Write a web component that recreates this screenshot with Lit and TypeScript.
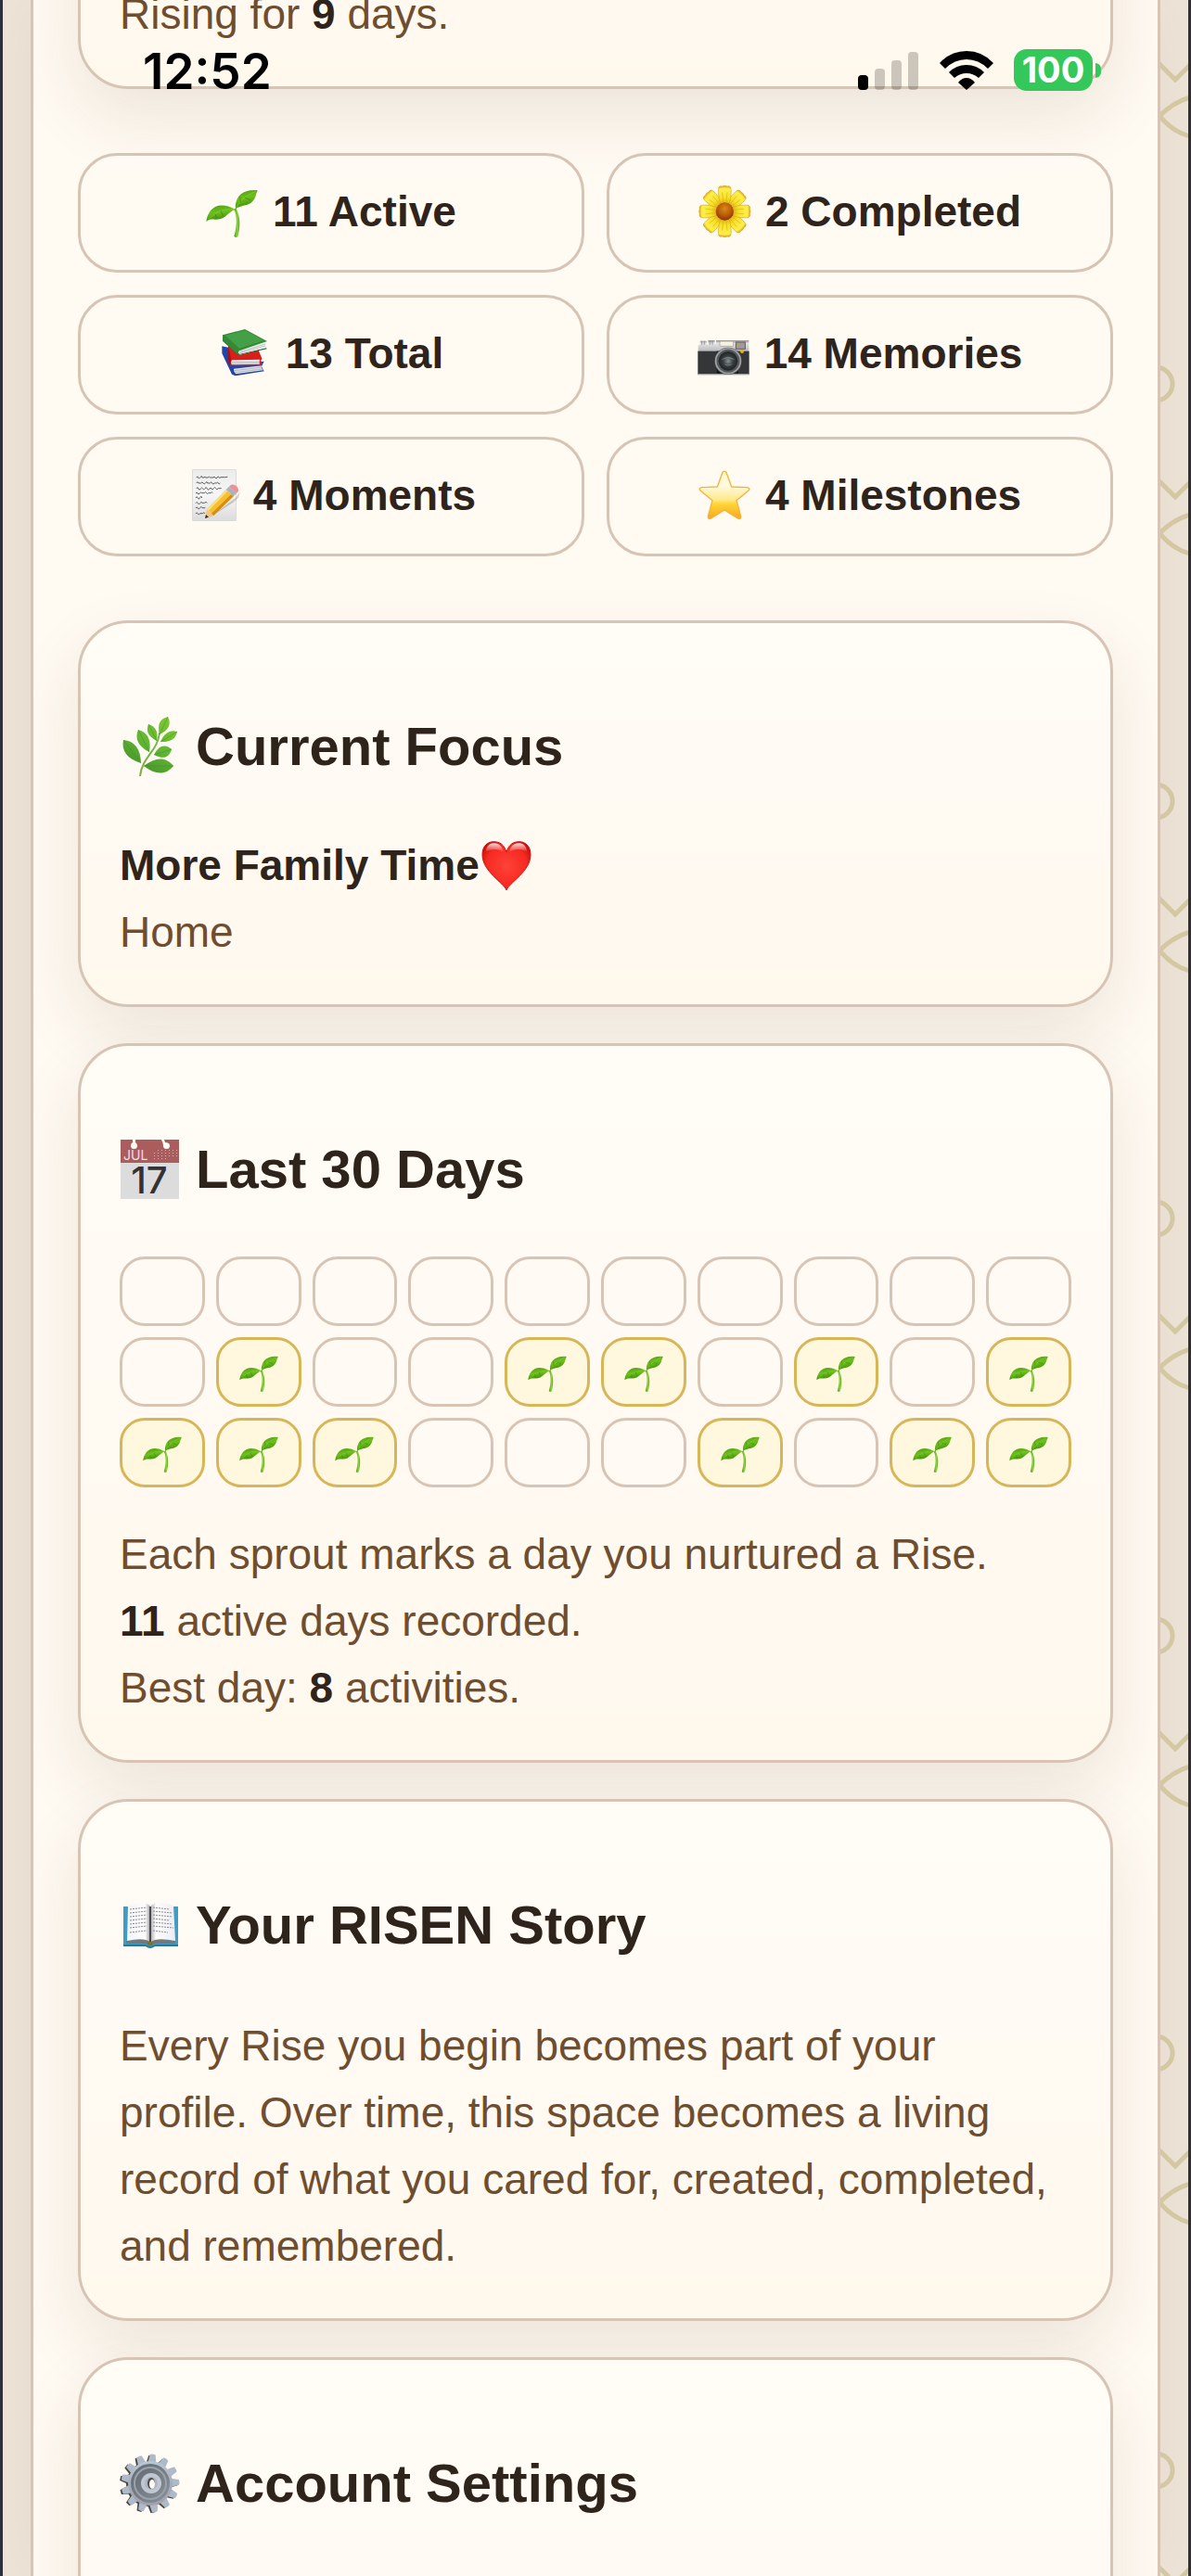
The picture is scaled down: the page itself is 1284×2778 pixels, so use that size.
import { LitElement, html, svg, css } from 'lit';
import { customElement, state } from 'lit/decorators.js';
import { classMap } from 'lit/directives/class-map.js';

// leaf outline between its base and its tip, bulging by w on each side
const leaf = (bx: number, by: number, tx: number, ty: number, w: number) => {
  const len = Math.hypot(tx - bx, ty - by);
  const nx = (-(ty - by) / len) * w;
  const ny = ((tx - bx) / len) * w;
  const ax = bx + (tx - bx) * 0.4;
  const ay = by + (ty - by) * 0.4;
  const cx = bx + (tx - bx) * 0.75;
  const cy = by + (ty - by) * 0.75;
  return `M${bx} ${by}C${ax + nx} ${ay + ny} ${cx + nx} ${cy + ny} ${tx} ${ty}C${cx - nx} ${cy - ny} ${ax - nx} ${ay - ny} ${bx} ${by}Z`;
};

const sprout = html`<svg class="emoji" viewBox="0 0 168 168" aria-hidden="true">
    <defs>
      <linearGradient id="sp-l" x1="0" y1="0" x2="0.3" y2="1">
        <stop offset="0" stop-color="#4f9a17" />
        <stop offset="0.5" stop-color="#6cc01c" />
        <stop offset="1" stop-color="#3f8a0c" />
      </linearGradient>
      <linearGradient id="sp-s" x1="0" y1="0" x2="1" y2="0">
        <stop offset="0" stop-color="#4d9a14" />
        <stop offset="0.6" stop-color="#8ad43e" />
        <stop offset="1" stop-color="#5aa51c" />
      </linearGradient>
    </defs>
    <path fill="url(#sp-s)" d="M91 76C101 100 101 130 91 165Q97 170 103 166C113 128 110 98 98 74Z" />
    <path fill="url(#sp-l)" d="M1 117C6 74 40 46 96 78C72 82 66 112 30 110C16 109 9 110 1 117Z" />
    <path fill="url(#sp-l)" d="M96 76C92 38 118 10 168 16C160 26 164 42 146 56C132 66 110 64 96 76Z" />
    <path fill="none" stroke="#86cf3a" stroke-width="2" d="M10 108C34 82 62 74 94 78M98 72C110 48 130 32 160 20" />
    <path fill="none" stroke="#3c820d" stroke-width="2" d="M30 92l4 14M48 82l8 18M112 54l-2-18M126 40l18 6" />
  </svg>`;

const flower = html`<svg class="emoji" viewBox="0 0 168 168" aria-hidden="true">
    <defs>
      <radialGradient id="fl-p" gradientUnits="userSpaceOnUse" cx="85" cy="84" r="84">
        <stop offset="0.3" stop-color="#e2b10c" />
        <stop offset="0.55" stop-color="#f8e32c" />
        <stop offset="0.88" stop-color="#fdf04a" />
        <stop offset="1" stop-color="#d99a1a" />
      </radialGradient>
      <radialGradient id="fl-c" cx="0.5" cy="0.35" r="0.65">
        <stop offset="0" stop-color="#d98a1a" />
        <stop offset="0.6" stop-color="#b85a08" />
        <stop offset="1" stop-color="#8c3204" />
      </radialGradient>
    </defs>
    ${[45, 135, 225, 315, 0, 90, 180, 270].map(
      (a) => svg`
        <g transform="rotate(${a} 85 84)">
          <path fill="url(#fl-p)" stroke="#d9a21c" stroke-width="2"
            d="M72 60C64 40 63 16 66 6Q70 0 77 3Q85 -1 93 3Q100 0 104 6C107 16 106 40 98 60Z" />
          <path stroke="#dcb01c" stroke-width="2" fill="none" d="M80 54L77 22M90 54L93 22" />
        </g>
      `,
    )}
    <circle cx="85" cy="84" r="29" fill="url(#fl-c)" />
  </svg>`;

const books = html`<svg class="emoji" viewBox="0 0 168 168" aria-hidden="true">
    <path fill="#2246a8" d="M10 61L34 66L46 118L146 110L138 126L144 139L147 142L53 157L42 152L10 84Z" />
    <path fill="#dfe2e8" d="M48 134L138 124Q136 132 143 139L55 151Q47 146 48 134Z" />
    <path stroke="#9aa0ac" stroke-width="2" d="M50 140L138 129M52 146L140 135" />
    <path fill="#d81f1c" d="M30 58L66 90L128 74L140 103L136 106L139 124L36 124L30 104Z" />
    <path fill="#a01414" d="M30 58L40 106L36 124L28 106Z" />
    <path fill="#ececee" d="M42 106L133 104Q129 112 132 119L42 121Q37 114 42 106Z" />
    <path stroke="#a5a5a8" stroke-width="2" d="M42 112H130M42 117H131" />
    <path fill="#1d6a20" d="M12 26L12 44L64 90L155 70L153 66L66 86Z" />
    <path fill="#f2f2f4" d="M68 75L152 48Q149 58 154 66L68 86Q62 80 68 75Z" />
    <path stroke="#a8a8ac" stroke-width="2" d="M68 79L150 54M67 83L151 60" />
    <path fill="#328a34" d="M12 25L84 6L156 45L66 76Q60 80 64 90L12 44Z" />
    <path fill="#43a046" d="M20 26L84 9L146 43L66 68Z" />
  </svg>`;

const camera = html`<svg class="emoji" viewBox="0 0 168 168" aria-hidden="true">
    <defs>
      <linearGradient id="ca-t" x1="0" y1="0" x2="0" y2="1">
        <stop offset="0" stop-color="#8f8f91" />
        <stop offset="0.25" stop-color="#e4e4e6" />
        <stop offset="1" stop-color="#b5b5b8" />
      </linearGradient>
      <radialGradient id="ca-l">
        <stop offset="0" stop-color="#8b9496" />
        <stop offset="0.5" stop-color="#3a4043" />
        <stop offset="1" stop-color="#202325" />
      </radialGradient>
    </defs>
    <path fill="url(#ca-t)" d="M2 58L8 56V44H30V56H34V42H56V54H60V42H166V80H2Z" />
    <path stroke="#77777a" stroke-width="2" d="M14 44V56M22 44V56M40 43V56M48 43V56" />
    <rect x="1" y="77" width="166" height="75" fill="#353638" />
    <rect x="62" y="77" width="70" height="75" fill="#1b1c1d" />
    <rect x="1" y="150" width="166" height="4" fill="#a0a0a2" />
    <rect x="72" y="45" width="44" height="16" rx="3" fill="#f6f1e2" stroke="#9a978c" stroke-width="2" />
    <rect x="124" y="48" width="30" height="22" fill="#a39b92" stroke="#5c5c5e" stroke-width="3" />
    <circle cx="99" cy="109" r="44" fill="#57595c" />
    <circle cx="99" cy="109" r="40" fill="none" stroke="#9fa2a5" stroke-width="5" />
    <circle cx="99" cy="109" r="31" fill="url(#ca-l)" />
    <path fill="#6d7779" d="M76 106Q98 84 122 106Q98 98 76 106ZM84 118Q99 132 116 116Q100 124 84 118Z" />
    <circle cx="144" cy="78" r="6" fill="#f5a81c" />
  </svg>`;

const memo = html`<svg class="emoji" viewBox="0 0 168 168" aria-hidden="true">
    <defs>
      <linearGradient id="me-p" x1="0" y1="0" x2="0" y2="1">
        <stop offset="0" stop-color="#ececec" />
        <stop offset="0.5" stop-color="#f6f6f6" />
        <stop offset="1" stop-color="#dcdcdc" />
      </linearGradient>
    </defs>
    <rect x="20" y="2" width="140" height="164" fill="url(#me-p)" stroke="#cfcfcf" stroke-width="2" />
    <g fill="none" stroke="#5c5c5c" stroke-width="3">
      <path d="M32 27q4-7 6 0t7-1t6 1h6q3-6 5 0h7q4-5 8 0h10q3-6 6 0t6 0t6-1t6 0h14l8-1" />
      <path d="M32 45q4-8 7 0h8q4-6 7 0t8-1t6 1h8q5-7 7 0t8 0h6q4-6 6 0t6 0" />
      <path d="M32 63q4-8 7 0t7 0q4-6 7 0t7-1t7 1t8 0q3-6 6 0t7-1t7 0t8 0h10" />
      <path d="M30 78q4-6 6 0t7 0t7-1h8q4-6 7 0t6 0h8q3-6 6 0" />
      <path d="M30 93q4-8 7 0t7-1t6 1" />
      <path d="M30 110q4-8 7 0t7 0t7-1h8q4-6 8 0" />
      <path d="M30 126q4-7 7 0t7-1t7 0h10" />
      <path d="M30 144q4-7 7 0t7-1h8q4-5 8 0" />
    </g>
    <path fill="#00000030" d="M66 163L160 92L172 74L168 92L150 108Z" />
    <path fill="#f0c48a" d="M60 158L66 130L88 150Z" />
    <path fill="#2b2b2b" d="M60 159L63 147L72 155Z" />
    <path fill="#f7c02c" d="M66 130L128 66L152 88L88 150Z" />
    <path fill="#d98e12" d="M81 143L145 81L152 88L88 150Z" />
    <path fill="#fde07a" d="M66 130L128 66L133 71L71 135Z" />
    <path fill="#a9b4bf" d="M128 66L138 56L162 78L152 88Z" />
    <path fill="#f08f94" d="M138 56Q148 44 162 55Q175 68 162 78Z" />
  </svg>`;

const star = html`<svg class="emoji" viewBox="0 0 168 168" aria-hidden="true">
    <defs>
      <linearGradient id="st" x1="0" y1="0" x2="0" y2="1">
        <stop offset="0" stop-color="#fff6c8" />
        <stop offset="0.3" stop-color="#fffbe0" />
        <stop offset="0.6" stop-color="#ffe98a" />
        <stop offset="0.68" stop-color="#ffd738" />
        <stop offset="1" stop-color="#f9a61a" />
      </linearGradient>
    </defs>
    <path fill="url(#st)" stroke="#f6b13a" stroke-width="4" stroke-linejoin="round"
      d="M78 10Q84 3 90 10L107 57L158 59Q170 62 161 70L123 101L137 152Q138 164 127 159L84 132L41 159Q30 164 31 152L45 101L7 70Q-2 62 10 59L61 57Z" />
  </svg>`;

const heart = html`<svg class="emoji" viewBox="0 0 168 168" role="img" aria-label="red heart">
    <defs>
      <radialGradient id="he" cx="0.5" cy="0.5" r="0.6">
        <stop offset="0" stop-color="#ff4238" />
        <stop offset="0.7" stop-color="#f62a22" />
        <stop offset="1" stop-color="#c80c0c" />
      </radialGradient>
      <linearGradient id="he-g" x1="0" y1="0" x2="0" y2="1">
        <stop offset="0" stop-color="#fff" stop-opacity="0.85" />
        <stop offset="1" stop-color="#fff" stop-opacity="0" />
      </linearGradient>
    </defs>
    <path fill="url(#he)" stroke="#cf1512" stroke-width="3"
      d="M87 165C78 140 9 105 9 50C9 20 28 8 46 8C66 8 80 18 87 42C94 18 108 8 128 8C146 8 165 20 165 50C165 105 96 140 87 165Z" />
    <path fill="url(#he-g)" d="M20 42C22 20 34 13 48 13C64 13 74 24 78 42C60 30 38 30 20 42ZM96 42C100 24 110 13 126 13C140 13 152 20 154 42C136 30 114 30 96 42Z" />
  </svg>`;

const herbLeaves = [
  [23, 50, 4, 25, 9],
  [32, 38, 20, 14, 8],
  [40, 26, 31, 8, 6],
  [43, 19, 52, 0, 7],
  [44, 27, 62, 16, 6],
  [37, 41, 56, 35, 8],
  [26, 53, 58, 53, 10],
];

const herb = html`<svg class="emoji" viewBox="0 0 64 64" aria-hidden="true">
    <defs>
      <linearGradient id="hb" gradientUnits="userSpaceOnUse" x1="50" y1="0" x2="16" y2="60">
        <stop offset="0" stop-color="#7cc832" />
        <stop offset="0.5" stop-color="#62b632" />
        <stop offset="1" stop-color="#438e2c" />
      </linearGradient>
    </defs>
    <path fill="none" stroke="#78b443" stroke-width="2" d="M22 64C23 52 30 44 37 34Q42 26 43 17" />
    ${herbLeaves.map(
      ([a, b, c, d, w]) => svg`
        <path fill="url(#hb)" d=${leaf(a, b, c, d, w)} />
        <path stroke="#3f8f24" stroke-opacity="0.5" d="M${a} ${b}L${c} ${d}" />
      `,
    )}
  </svg>`;

const calendar = html`<svg class="emoji" viewBox="0 0 64 64" aria-hidden="true">
    <rect x="1" width="63" height="64" fill="#dcdcdc" />
    <rect x="1" width="63" height="25" fill="#ab5d5d" />
    <path fill="#fffcf5" d="M14 0H17V3Q19 4 19 6.500A3.500 3.500 0 0 1 12 6.500Q12 4 14 3ZM45 0H48L49 3Q54 3 54 6.500A3.500 3.500 0 0 1 47 6.500Q47 4 45 0Z" />
    <text class="cal-month" x="4" y="22">JUL</text>
    <path stroke="#d8aaaa" stroke-width="1" stroke-dasharray="1 2"
      d="M37.500 14V22M41.500 11V22M45.500 11V22M49.500 11V22M53.500 11V20M57.500 11V20M61.500 11V18" />
    <text class="cal-day" x="32" y="58" text-anchor="middle">17</text>
  </svg>`;

const openBook = html`<svg class="emoji" viewBox="0 0 64 64" aria-hidden="true">
    <defs>
      <linearGradient id="ob-l" x1="0" y1="0" x2="1" y2="0">
        <stop offset="0" stop-color="#f4f3f7" />
        <stop offset="0.8" stop-color="#fdfdfe" />
        <stop offset="1" stop-color="#a8a8ae" />
      </linearGradient>
      <linearGradient id="ob-r" x1="1" y1="0" x2="0" y2="0">
        <stop offset="0" stop-color="#ececf2" />
        <stop offset="0.8" stop-color="#fdfdfe" />
        <stop offset="1" stop-color="#b8b8be" />
      </linearGradient>
    </defs>
    <path fill="#3f9cc4" d="M4 12H63V54H38Q33 58 28 54H4Z" />
    <path fill="#2a7599" d="M4 53H28Q33 57 38 53H63V55H38Q33 59 28 55H4Z" />
    <path fill="#77777a" d="M7 49L32 47L60 49V52H38L33 54L28 52H7Z" />
    <path fill="url(#ob-l)" d="M9 11Q26 5 32.500 11V50Q26 45 8 49Z" />
    <path fill="url(#ob-r)" d="M58 11Q40 5 34 11V50Q40 45 60 49Z" />
    <path stroke="#4a4a4c" stroke-width="2" d="M33 12V51" />
    <path stroke="#8c8c92" stroke-width="1" stroke-dasharray="2 1"
      d="M11 15L29 13M11 19L29 17M11 23L29 21M11 27L29 25M11 31L29 29M11 35L29 33M11 40L29 38M36 13L54 15M36 17L57 19M36 21L57 23M36 25L54 27M36 29L57 31M36 33L58 35M36 38L52 40" />
    <path fill="#7c7420" d="M29 51Q33 49 37 51L35 54H31Z" />
  </svg>`;

const gearTeeth = [5, 33, 61, 88, 116, 143, 171, 199, 226, 254, 282, 309, 337];

const gear = html`<svg class="emoji" viewBox="0 0 64 64" aria-hidden="true">
    <defs>
      <linearGradient id="ge" x1="0" y1="0" x2="0" y2="1">
        <stop offset="0" stop-color="#b9c8d6" />
        <stop offset="0.5" stop-color="#a5afbc" />
        <stop offset="1" stop-color="#a49fae" />
      </linearGradient>
      <linearGradient id="ge-d" x1="0" y1="0" x2="1" y2="1">
        <stop offset="0" stop-color="#62686f" />
        <stop offset="1" stop-color="#8b929a" />
      </linearGradient>
    </defs>
    <g fill="#4a4643">
      <circle cx="31" cy="33" r="24" />
      ${gearTeeth.map(
        (a) => svg`<path transform="rotate(${a} 31 33)" d="M26.500 11L28.500 2H33.500L35.500 11Z" />`,
      )}
    </g>
    <g fill="#aebac8">
      ${gearTeeth.map(
        (a) => svg`<path transform="rotate(${a} 33 32)" d="M28.500 10L30 1Q33 0 36 1L37.500 10Z" />`,
      )}
    </g>
    <circle cx="33" cy="32" r="24" fill="url(#ge)" />
    <circle cx="33" cy="32" r="21" fill="url(#ge-d)" />
    <circle cx="33" cy="32" r="17" fill="none" stroke="#9aa2aa" stroke-width="2" />
    <circle cx="34" cy="32" r="11" fill="#c0c6d2" />
    <circle cx="34" cy="32" r="7" fill="#aeb4c0" />
    <ellipse cx="34" cy="32" rx="4" ry="6" fill="#4c4a48" />
    <ellipse cx="35" cy="33" rx="3" ry="5" fill="#fffcf5" />
  </svg>`;

const stats = [
  { icon: sprout, label: '11 Active' },
  { icon: flower, label: '2 Completed' },
  { icon: books, label: '13 Total' },
  { icon: camera, label: '14 Memories' },
  { icon: memo, label: '4 Moments' },
  { icon: star, label: '4 Milestones' },
];

@customElement('app-root')
export class AppRoot extends LitElement {
  @state() activeDays = [11, 14, 15, 17, 19, 20, 21, 22, 26, 28, 29];

  static styles = css`
    :host {
      display: block;
      position: relative;
      height: 100vh;
      overflow: hidden;
      box-sizing: border-box;
      border: 0 solid #2e2f3a;
      border-width: 0 3px;
      background: #ede3d7;
      color: #2f241c;
      font: 46px/72px Arial, 'Liberation Sans', sans-serif;
    }
    .status {
      position: absolute;
      inset: 53px 94px auto 151px;
      display: flex;
      align-items: center;
      gap: 22px;
      height: 45px;
      z-index: 3;
      color: #000;
      font-family: Inter, sans-serif;
    }
    .time {
      margin-right: auto;
      padding-top: 3px;
      font-size: 53px;
      font-weight: 600;
      line-height: 45px;
    }
    .signal {
      width: 66px;
      height: 42px;
    }
    .wifi {
      width: 58px;
      height: 42px;
    }
    .battery {
      display: flex;
      align-items: center;
      gap: 3px;
    }
    .level {
      width: 85px;
      height: 45px;
      border-radius: 14px;
      background: #34c759;
      color: #fff;
      font-size: 38px;
      font-weight: 700;
      line-height: 45px;
      text-align: center;
    }
    .nub {
      width: 6px;
      height: 16px;
      border-radius: 0 8px 8px 0;
      background: #34c759;
    }
    .shell {
      display: grid;
      grid-template-columns: 30px 1fr 30px;
      height: 100%;
    }
    .gutter {
      width: 100%;
      height: 100%;
    }
    .frame {
      min-width: 0;
      overflow: hidden;
      box-shadow: 0 0 60px rgba(90, 60, 30, 0.04);
    }
    .page {
      display: flex;
      flex-direction: column;
      gap: 39px;
      padding: 0 48px;
      border: 0 solid #d8c4b4;
      border-width: 0 3px;
      background: #fffaf2;
      overflow: hidden;
    }
    .card {
      padding: 42px;
      border: 3px solid #d8c4b4;
      border-radius: 54px;
      background: linear-gradient(#fffdf6, #fffaf3 45%, #fff8ed);
      box-shadow: 0 30px 72px rgba(75, 50, 20, 0.1);
    }
    .profile {
      display: flex;
      align-items: flex-end;
      min-height: 300px;
      margin-top: -294px;
    }
    .settings {
      min-height: 600px;
    }
    h2 {
      margin: 45px 0 49px;
      font-size: 58px;
      line-height: 91px;
    }
    .focus h2 {
      margin-bottom: 47px;
    }
    h2 .emoji {
      width: 64px;
      height: 64px;
      margin-right: 18px;
    }
    p {
      margin: 0;
      color: #6f4e30;
    }
    strong {
      color: #2f241c;
    }
    .emoji {
      width: 56px;
      height: 56px;
      vertical-align: -12px;
      overflow: visible;
    }
    .cal-month {
      fill: #f3dede;
      font: 14px Inter, sans-serif;
    }
    .cal-day {
      fill: #333;
      font: 500 40px Inter, sans-serif;
    }
    .stats {
      display: grid;
      grid-template-columns: 1fr 1fr;
      gap: 24px;
      margin: 30px 0;
      padding: 0;
      list-style: none;
    }
    .stat {
      padding: 24px 0 27px;
      border: 3px solid #d8c4b4;
      border-radius: 42px;
      background: rgba(255, 251, 243, 0.7);
      font-weight: bold;
      text-align: center;
      white-space: nowrap;
    }
    .stat .emoji {
      margin-right: 16px;
    }
    .days {
      display: grid;
      grid-template-columns: repeat(10, 1fr);
      gap: 12px;
      margin: 0 0 36px;
      padding: 0;
      list-style: none;
    }
    .day {
      display: flex;
      align-items: center;
      justify-content: center;
      height: 69px;
      border: 3px solid #d8c4b4;
      border-radius: 27px;
      background: #fffbf4;
    }
    .day.active {
      border-color: #d6b656;
      background: #fff8de;
    }
    .day .emoji {
      width: 42px;
      height: 42px;
    }
  `;

  renderStatus() {
    return html`
      <div class="status">
        <span class="time">12:52</span>
        <svg class="signal" viewBox="0 0 66 42" aria-hidden="true">
          <rect y="26" width="11" height="16" rx="4" />
          <g opacity="0.2">
            <rect x="18" y="19" width="11" height="23" rx="4" />
            <rect x="36" y="10" width="11" height="32" rx="4" />
            <rect x="54" y="1" width="11" height="41" rx="4" />
          </g>
        </svg>
        <svg class="wifi" viewBox="0 0 58 42" aria-hidden="true">
          <path d="M0 13Q12 0 29 0T58 13L52 19Q42 9 29 9T6 19Z" />
          <path d="M10 23Q18 15 29 15T48 23L42 29Q36 24 29 24T16 29Z" />
          <path d="M20 34Q24 29 29 29T38 34L29 42Z" />
        </svg>
        <div class="battery">
          <div class="level">100</div>
          <div class="nub"></div>
        </div>
      </div>
    `;
  }

  render() {
    return html`
      ${this.renderStatus()}
      <div class="shell">
        <div></div>
        <div class="frame">
          <main class="page">
            <section class="card profile">
              <p>Rising for <strong>9</strong> days.</p>
            </section>

            <ul class="stats">
              ${stats.map((s) => html`<li class="stat">${s.icon}${s.label}</li>`)}
            </ul>

            <section class="card focus">
              <h2>${herb}Current Focus</h2>
              <p><strong>More Family Time${heart}</strong><br />Home</p>
            </section>

            <section class="card">
              <h2>${calendar}Last 30 Days</h2>
              <ul class="days">
                ${Array.from({ length: 30 }, (_, i) => {
                  const active = this.activeDays.includes(i);
                  return html`<li class=${classMap({ day: true, active })}>${active ? sprout : ''}</li>`;
                })}
              </ul>
              <p>
                Each sprout marks a day you nurtured a Rise.<br />
                <strong>11</strong> active days recorded.<br />
                Best day: <strong>8</strong> activities.
              </p>
            </section>

            <section class="card">
              <h2>${openBook}Your RISEN Story</h2>
              <p>
                Every Rise you begin becomes part of your profile. Over time, this space becomes a
                living record of what you cared for, created, completed, and remembered.
              </p>
            </section>

            <section class="card settings">
              <h2>${gear}Account Settings</h2>
            </section>
          </main>
        </div>
        <svg class="gutter" aria-hidden="true">
          <defs>
            <pattern id="vine" width="30" height="450" patternUnits="userSpaceOnUse">
              <g fill="none" stroke="#d3c8a2" stroke-width="5">
                <path d="M-2 68L16 86L32 70" />
                <path d="M-2 126Q14 110 32 105M-2 124Q14 143 32 147" />
                <circle cx="-5" cy="414" r="18" />
              </g>
            </pattern>
          </defs>
          <rect width="100%" height="100%" fill="url(#vine)" />
        </svg>
      </div>
    `;
  }
}
